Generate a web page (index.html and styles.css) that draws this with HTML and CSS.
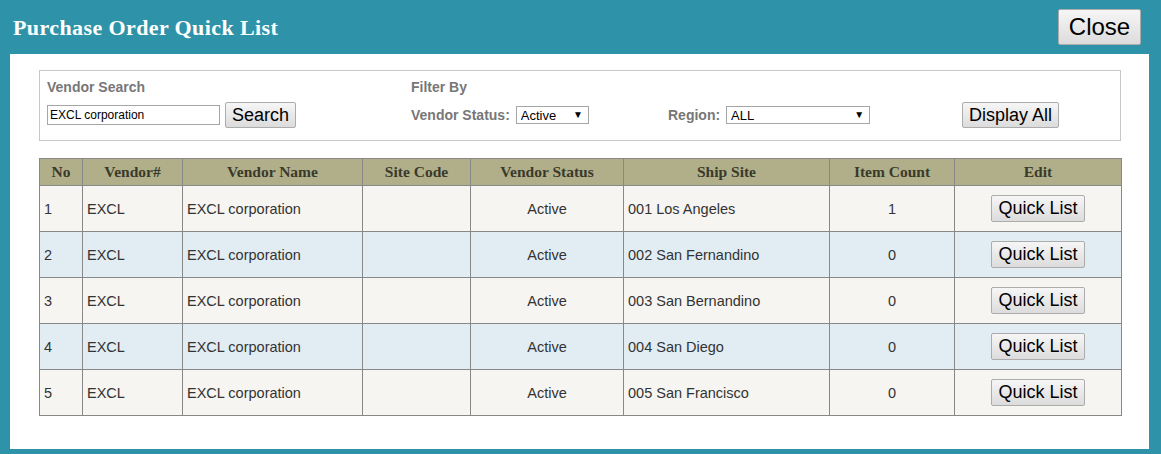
FILE: index.html
```html
<!DOCTYPE html>
<html lang="en">

<head>
	<meta charset="UTF-8">
	<title>Purchase Order Quick List</title>
	<link rel="stylesheet" href="styles.css">
</head>

<body>
	<div class="title-bar">
		<h1>Purchase Order Quick List</h1>
		<button class="btn close-btn">Close</button>
	</div>

	<div class="panel">
		<div class="filter-box">
			<div class="filter-label">Vendor Search</div>
			<div class="filter-label">Filter By</div>
			<div></div>
			<div></div>

			<div class="filter-row">
				<input type="text" class="search-input" value="EXCL corporation">
				<button class="btn search-btn">Search</button>
			</div>
			<div class="filter-row">
				<label class="field-label">Vendor Status:</label>
				<span class="select-wrap status-select">
					<select>
						<option>Active</option>
						<option>Inactive</option>
					</select>
				</span>
			</div>
			<div class="filter-row">
				<label class="field-label">Region:</label>
				<span class="select-wrap region-select">
					<select>
						<option>ALL</option>
					</select>
				</span>
			</div>
			<div class="filter-row">
				<button class="btn display-btn">Display All</button>
			</div>
		</div>

		<table class="quick-list">
			<colgroup>
				<col style="width:43px">
				<col style="width:100px">
				<col style="width:180px">
				<col style="width:108px">
				<col style="width:153px">
				<col style="width:206px">
				<col style="width:125px">
				<col style="width:167px">
			</colgroup>
			<thead>
				<tr>
					<th>No</th>
					<th>Vendor#</th>
					<th>Vendor Name</th>
					<th>Site Code</th>
					<th>Vendor Status</th>
					<th>Ship Site</th>
					<th>Item Count</th>
					<th>Edit</th>
				</tr>
			</thead>
			<tbody>
				<tr>
					<td>1</td>
					<td>EXCL</td>
					<td>EXCL corporation</td>
					<td></td>
					<td class="center">Active</td>
					<td>001 Los Angeles</td>
					<td class="center">1</td>
					<td class="center"><button class="btn list-btn">Quick List</button></td>
				</tr>
				<tr>
					<td>2</td>
					<td>EXCL</td>
					<td>EXCL corporation</td>
					<td></td>
					<td class="center">Active</td>
					<td>002 San Fernandino</td>
					<td class="center">0</td>
					<td class="center"><button class="btn list-btn">Quick List</button></td>
				</tr>
				<tr>
					<td>3</td>
					<td>EXCL</td>
					<td>EXCL corporation</td>
					<td></td>
					<td class="center">Active</td>
					<td>003 San Bernandino</td>
					<td class="center">0</td>
					<td class="center"><button class="btn list-btn">Quick List</button></td>
				</tr>
				<tr>
					<td>4</td>
					<td>EXCL</td>
					<td>EXCL corporation</td>
					<td></td>
					<td class="center">Active</td>
					<td>004 San Diego</td>
					<td class="center">0</td>
					<td class="center"><button class="btn list-btn">Quick List</button></td>
				</tr>
				<tr>
					<td>5</td>
					<td>EXCL</td>
					<td>EXCL corporation</td>
					<td></td>
					<td class="center">Active</td>
					<td>005 San Francisco</td>
					<td class="center">0</td>
					<td class="center"><button class="btn list-btn">Quick List</button></td>
				</tr>
			</tbody>
		</table>
	</div>
</body>

</html>
```

FILE: styles.css
```css
body {
	margin: 0;
	padding: 0;
	background-color: #2e93a9;
	font-family: "Liberation Sans", Arial, sans-serif;
}

.title-bar {
	height: 54px;
	display: flex;
	align-items: center;
	justify-content: space-between;
	padding: 0 20px 0 13px;
}

	.title-bar h1 {
		margin: 0;
		font-family: "Liberation Serif", "Times New Roman", serif;
		font-size: 22px;
		letter-spacing: 0.4px;
		font-weight: bold;
		color: #fff;
		padding-top: 1px;
	}

.btn {
	font-family: "Liberation Sans", Arial, sans-serif;
	color: #000;
	background: linear-gradient(#f6f6f6, #dcdcdc);
	border: 1px solid #acacac;
	border-radius: 2px;
	padding: 0;
	cursor: pointer;
}

.close-btn {
	width: 83px;
	height: 36px;
	font-size: 24px;
}

.panel {
	background-color: #fff;
	margin: 0 12px 6px 10px;
	padding: 16px 28px 33px 29px;
}

/* filter area */
.filter-box {
	border: 1px solid #c8c8c8;
	padding: 8px 7px 12px;
	display: grid;
	grid-template-columns: 364px 257px 294px auto;
	row-gap: 7px;
}

.filter-label,
.field-label {
	font-size: 14px;
	font-weight: bold;
	color: #777;
	line-height: 16px;
}

.filter-row {
	display: flex;
	align-items: center;
	height: 26px;
}

.field-label {
	margin-right: 6px;
}

.search-input {
	width: 173px;
	height: 20px;
	box-sizing: border-box;
	border: 1px solid #a6a6a6;
	font-family: "Liberation Sans", Arial, sans-serif;
	font-size: 12px;
	padding: 0 2px;
	color: #000;
	margin: 0;
}

.search-btn {
	width: 71px;
	height: 26px;
	font-size: 18px;
	margin-left: 5px;
}

.select-wrap {
	position: relative;
	display: inline-block;
}

	.select-wrap select {
		appearance: none;
		-webkit-appearance: none;
		height: 18px;
		box-sizing: border-box;
		border: 1px solid #a6a6a6;
		border-radius: 0;
		background: #fff;
		font-family: "Liberation Sans", Arial, sans-serif;
		font-size: 13px;
		color: #000;
		padding: 0 4px;
		margin: 0;
		width: 100%;
	}

	.select-wrap::after {
		content: "\25BC";
		position: absolute;
		right: 6px;
		top: 3px;
		font-size: 10px;
		line-height: 12px;
		color: #000;
		pointer-events: none;
	}

.status-select {
	width: 73px;
}

.region-select {
	width: 144px;
}

.display-btn {
	width: 97px;
	height: 26px;
	font-size: 18px;
}

/* list table */
.quick-list {
	width: 1082px;
	margin-top: 17px;
	border-collapse: collapse;
	table-layout: fixed;
	border: 1px solid #888;
}

	.quick-list th {
		background-color: #b1af8a;
		font-family: "Liberation Serif", "Times New Roman", serif;
		font-size: 15.5px;
		font-weight: bold;
		color: #3a3a2c;
		height: 26px;
		padding: 0;
		border: 1px solid #888;
	}

	.quick-list td {
		font-size: 14.5px;
		color: #333;
		height: 45px;
		padding: 0 4px;
		border: 1px solid #888;
	}

	.quick-list tbody tr:nth-child(odd) {
		background-color: #f6f5f1;
	}

	.quick-list tbody tr:nth-child(even) {
		background-color: #e2edf3;
	}

	.quick-list .center {
		text-align: center;
	}

.list-btn {
	width: 94px;
	height: 27px;
	font-size: 18px;
}
```
